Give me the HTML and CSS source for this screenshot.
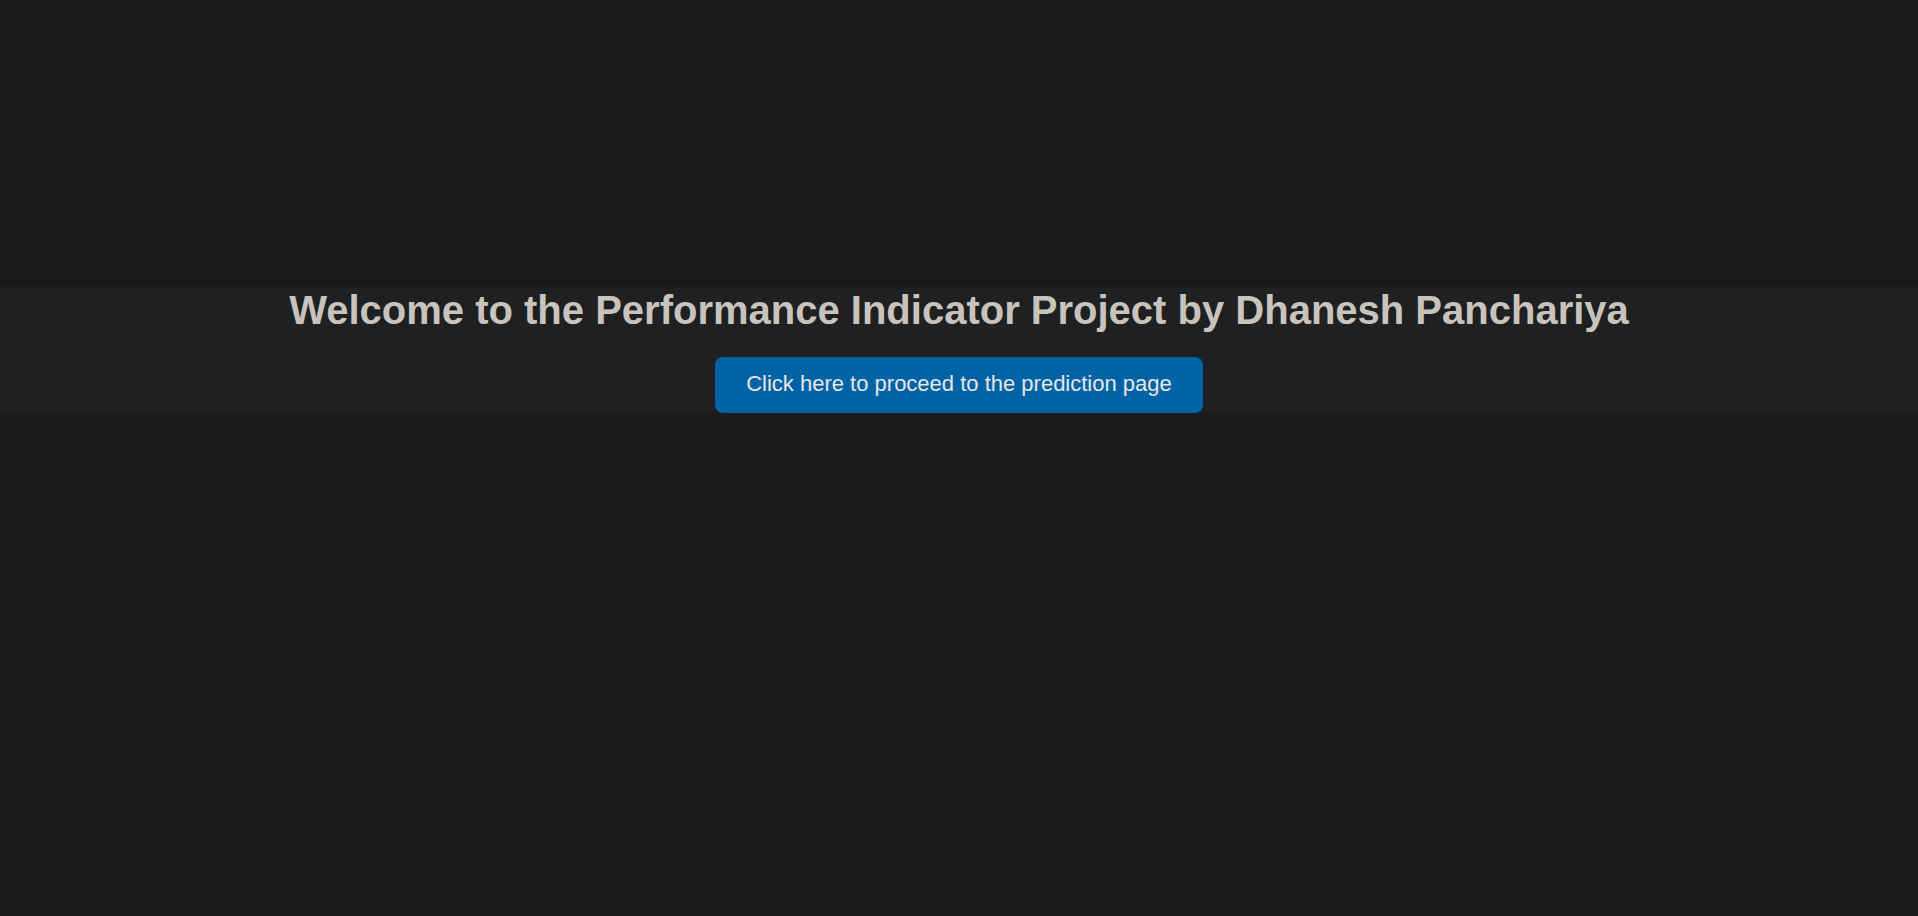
FILE: index.html
```html
<!DOCTYPE html>
<html lang="en">
<head>
<meta charset="utf-8">
<title>Performance Indicator Project</title>
<link rel="stylesheet" href="styles.css">
</head>
<body>
  <main class="page">
    <section class="hero">
      <h1 class="hero-title">Welcome to the Performance Indicator Project by Dhanesh Panchariya</h1>
      <a class="hero-button" href="#">Click here to proceed to the prediction page</a>
    </section>
  </main>
</body>
</html>
```

FILE: styles.css
```css
html, body {
  margin: 0;
  padding: 0;
  background: #181a1b;
  height: 100%;
}

body {
  font-family: "Liberation Sans", Arial, sans-serif;
  color: #e8e6e3;
}

.page {
  padding-top: 287px;
}

.hero {
  background: #1e2022;
  display: flex;
  flex-direction: column;
  align-items: center;
  height: 126px;
}

.hero-title {
  margin: 0;
  font-size: 40px;
  font-weight: bold;
  line-height: 46px;
  color: #c8c3bc;
}

.hero-button {
  margin-top: 24px;
  display: inline-block;
  background: #0063a6;
  color: #e8e6e3;
  text-decoration: none;
  font-size: 22px;
  line-height: 25px;
  padding: 14px 31px 17px;
  border-radius: 8px;
}
```
